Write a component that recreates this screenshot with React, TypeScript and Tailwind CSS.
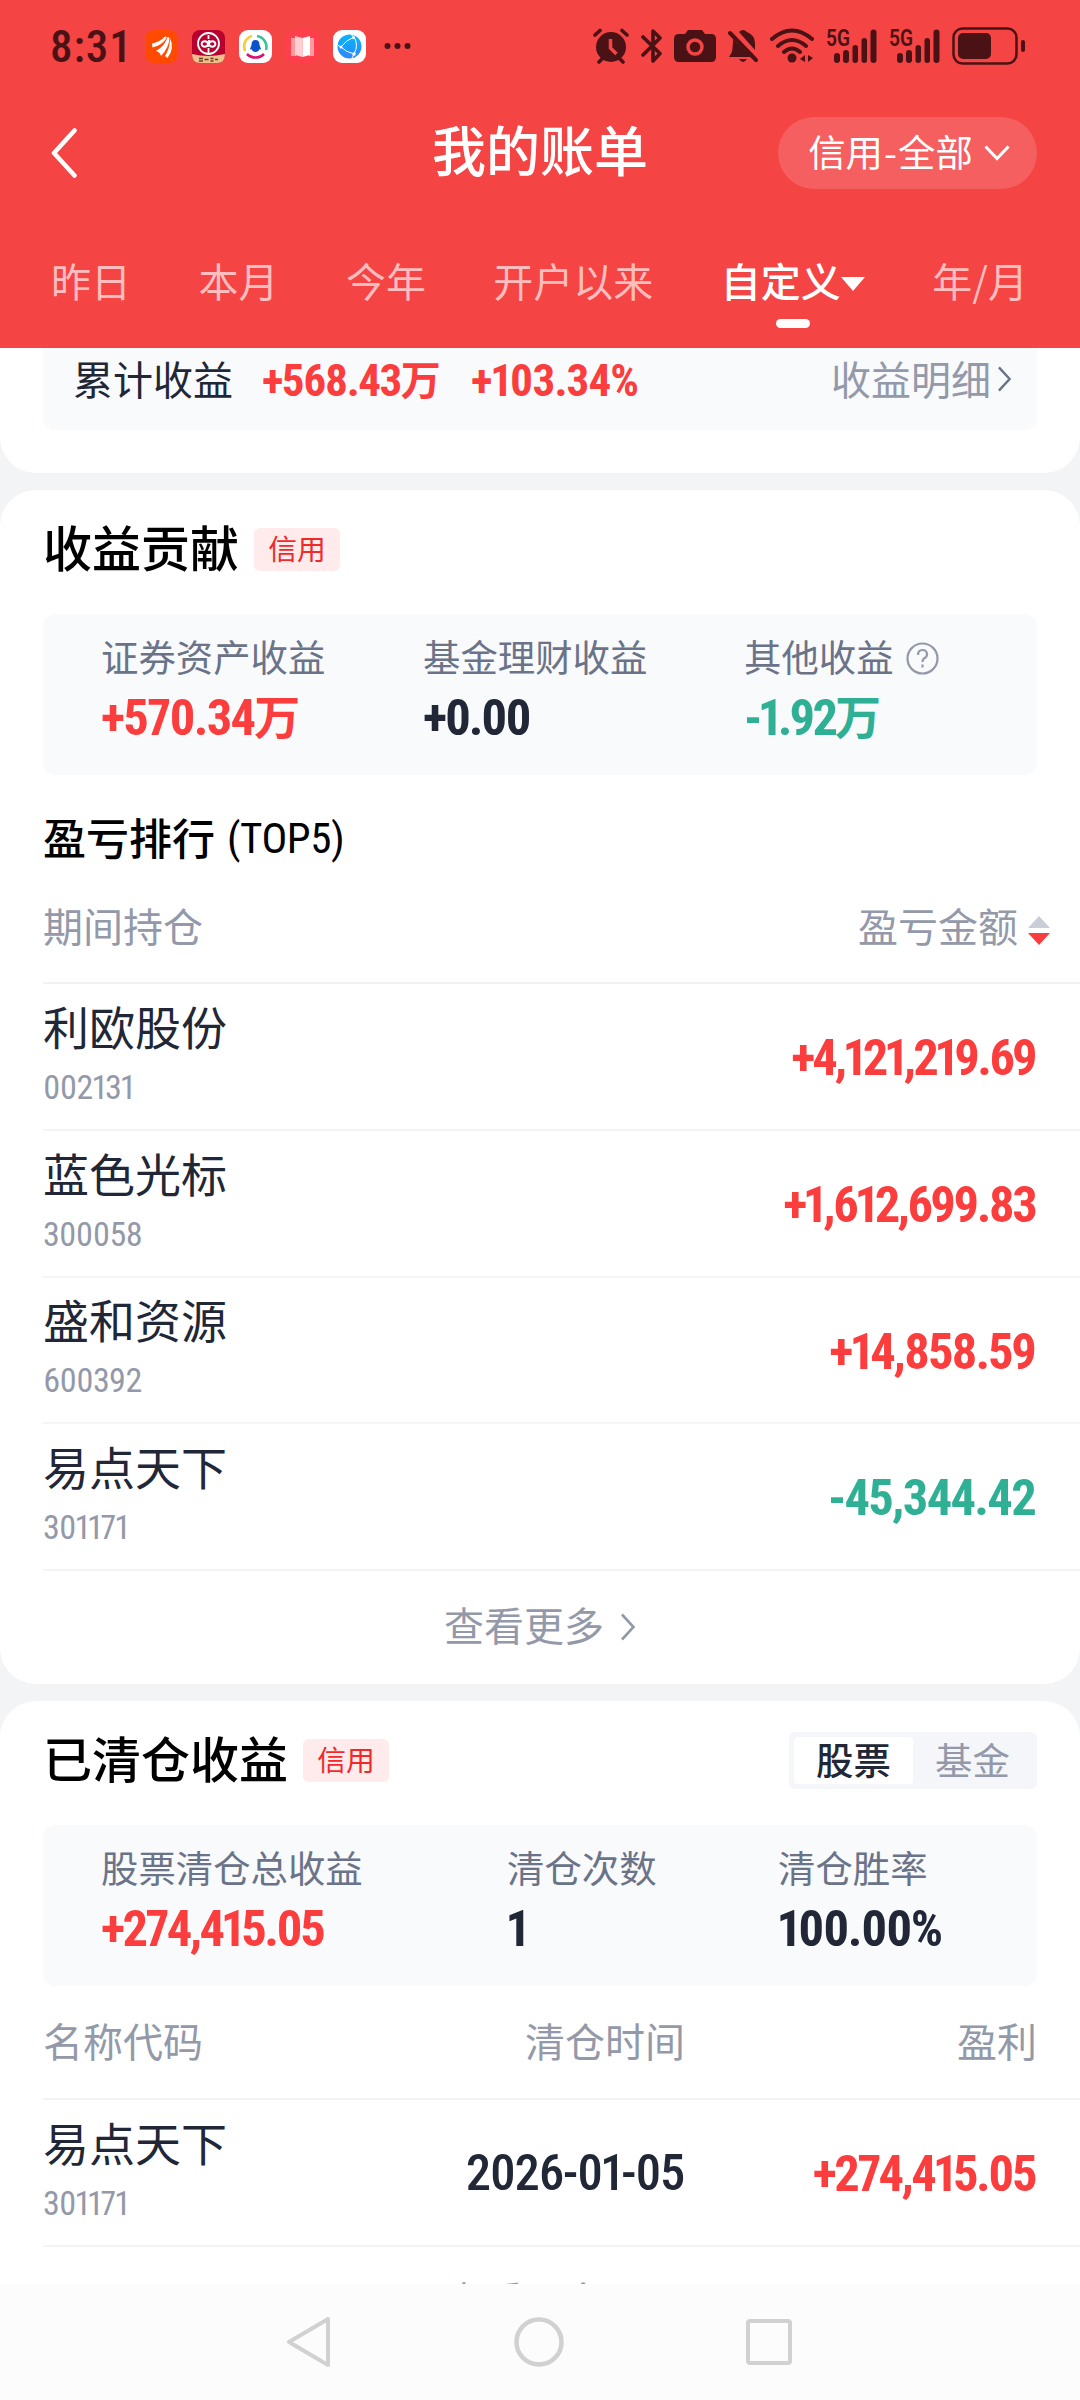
import React from "react";

const holdings = [
  { name: "利欧股份", code: "002131", amount: "+4,121,219.69", amountClass: "text-[#fb3d3d] tracking-[-0.06em]" },
  { name: "蓝色光标", code: "300058", amount: "+1,612,699.83", amountClass: "text-[#fb3d3d] tracking-[-0.056em]" },
  { name: "盛和资源", code: "600392", amount: "+14,858.59", amountClass: "text-[#fb3d3d] tracking-[-0.045em]" },
  { name: "易点天下", code: "301171", amount: "-45,344.42", amountClass: "text-[#2fb095] tracking-[-0.034em]" },
];

type NumProps = { text: string; className?: string };

// Condensed figures
const Num: React.FC<NumProps> = ({ text, className = "" }) => (
  <span
    className={`inline-block whitespace-nowrap proportional-nums font-stretch-[80%] font-[Roboto,'Noto_Sans_CJK_SC',sans-serif] ${className}`}
  >
    {text}
  </span>
);

const ChevronRight: React.FC<{ className?: string }> = ({ className }) => (
  <svg viewBox="0 0 16 28" className={className} fill="none" stroke="currentColor" strokeWidth="2.6">
    <path d="M2 1.5 L13.5 14 L2 26.5" />
  </svg>
);

const Tag: React.FC = () => (
  <span className="flex h-[43px] w-[86px] items-center justify-center rounded-md bg-[#ffebeb] pb-px text-[28.8px] text-[#f02a2a]">
    信用
  </span>
);

const Signal: React.FC = () => (
  <svg width="51" height="42" viewBox="0 -3 51 42" fill="currentColor">
    <text x="0" y="18" fontSize="24" fontWeight="600" fontFamily="Roboto" textLength="24" lengthAdjust="spacingAndGlyphs">
      5G
    </text>
    <rect x="8" y="25" width="6" height="10" rx="3" />
    <rect x="17" y="22" width="6" height="13" rx="3" />
    <rect x="26.500" y="17" width="5.500" height="18" rx="2.700" />
    <rect x="35.500" y="10" width="5.500" height="25" rx="2.700" />
    <rect x="44.500" y="1.500" width="6" height="33.500" rx="3" />
  </svg>
);

const StatusBar: React.FC = () => (
  <div className="flex h-[92px] items-center pl-[50px] pr-[55px] text-[#4a1214]">
    <span className="w-[95px] font-[Roboto,sans-serif] text-[45px] font-medium leading-none tracking-[0.02em] font-stretch-[85%]">8:31</span>
    <div className="flex items-center gap-[14px]">
      <svg width="33" height="33" viewBox="0 0 33 33">
        <rect width="33" height="33" rx="9" fill="#ff4a00" />
        <path d="M7 13.500Q15 12 20 6.500L22 7Q18 15 7.500 17.500ZM11 21Q20 16 22.500 7L24.500 7.500Q24 18 16 26Q15 22 11 21ZM20 26Q25 18 25 8.500Q30 18 22.500 28Z" fill="#fff" />
      </svg>
      <svg width="33" height="33" viewBox="0 0 33 33">
        <rect width="33" height="33" rx="8" fill="#b8002f" />
        <path d="M0 24 Q16 28 33 24 Q33 33 25 33 H8 Q0 33 0 24Z" fill="#eec08c" />
        <path d="M7 28.500h4M7 31h4M12.500 29.500h4M18.500 28.500h3M18.500 31h3M23 29.500h3" stroke="#6b3a22" strokeWidth="1.400" />
        <circle cx="16.500" cy="13.500" r="10.500" fill="none" stroke="#fff" strokeWidth="1.800" />
        <path d="M16.500 5v4M16.500 18v5M9.500 14a3.300 3.300 0 0 1 6.500 0v3M16 14a3.300 3.300 0 0 1-6.500 0M17 14a3.300 3.300 0 0 1 6.500 0a3.300 3.300 0 0 1-6.500 0v-4" fill="none" stroke="#fff" strokeWidth="1.800" />
      </svg>
      <svg width="33" height="33" viewBox="0 0 33 33">
        <rect width="33" height="33" rx="9" fill="#fff" />
        <path d="M6 21 A11 11 0 0 1 13 6" fill="none" stroke="#f3cf3d" strokeWidth="2.600" />
        <path d="M18 6 A11 11 0 0 1 27 20" fill="none" stroke="#36c39e" strokeWidth="2.600" />
        <path d="M8 24 A12 12 0 0 0 25 24" fill="none" stroke="#d9126c" strokeWidth="2.600" />
        <path d="M16.500 10q4 0 4 5l1.500 4q-1 1-1.500 0q-1 3-4 3t-4-3q-.5 1-1.500 0l1.500-4q0-5 4-5z" fill="#0b53c8" />
      </svg>
      <svg width="33" height="33" viewBox="0 0 33 33">
        <rect width="33" height="33" rx="9" fill="#ff3f4b" />
        <path d="M5 8h5v18H5zM23 8h5v18h-5z" fill="#ff9ba0" />
        <path d="M9 6l7.500 2v19L9 25z" fill="#ffd0d2" />
        <path d="M24 6l-7.500 2v19l7.500-2z" fill="#fff" />
      </svg>
      <svg width="33" height="33" viewBox="0 0 33 33">
        <defs>
          <linearGradient id="globe" x1="0" y1="0" x2="0" y2="1">
            <stop offset="0" stopColor="#07b6fb" />
            <stop offset="1" stopColor="#2f86fb" />
          </linearGradient>
        </defs>
        <rect width="33" height="33" rx="9" fill="#fff" />
        <circle cx="16.500" cy="16.500" r="12" fill="url(#globe)" />
        <path d="M21 7Q13 10 8 17Q13 22 21 24M21 7Q26 15 21 24M4.500 15l3.500 2M18 4.500l3 2.500M21 24l-2 4" fill="none" stroke="#fff" strokeWidth="1" />
        <g fill="#fff">
          <circle cx="20.500" cy="7.500" r="1.500" />
          <circle cx="8" cy="17" r="1.500" />
          <circle cx="21" cy="24" r="1.800" />
        </g>
      </svg>
    </div>
    <svg className="ml-[18px]" width="27" height="8" viewBox="0 0 27 8" fill="currentColor">
      <circle cx="3.500" cy="4" r="3" />
      <circle cx="13.500" cy="4" r="3" />
      <circle cx="23.500" cy="4" r="3" />
    </svg>

    <div className="ml-auto flex items-center gap-3">
      <svg width="36" height="36" viewBox="0 0 36 36" fill="currentColor">
        <circle cx="18" cy="19" r="15" />
        <path d="M2 7L7 2.500M34 7L29 2.500M6 34l4-4M30 34l-4-4" stroke="currentColor" strokeWidth="3.600" strokeLinecap="round" />
        <path d="M17.500 11v9l6 6" fill="none" stroke="#f44444" strokeWidth="3.500" />
      </svg>
      <svg width="21" height="36" viewBox="0 0 21 36" fill="none" stroke="currentColor" strokeWidth="3.600" strokeLinejoin="round" strokeLinecap="round">
        <path d="M2 9L19 25.500L12 33V3L19 10L2 27" />
      </svg>
      <svg width="42" height="34" viewBox="0 0 42 34">
        <path d="M5 5h6l3-4h14l3 4h6q5 0 5 5v18q0 5-5 5H5q-5 0-5-5V10q0-5 5-5z" fill="currentColor" />
        <circle cx="21" cy="18" r="7" fill="none" stroke="#f44444" strokeWidth="3.500" />
      </svg>
      <svg width="30" height="36" viewBox="0 0 30 36" fill="currentColor">
        <path d="M11 4q4-4 8 0q8 3 8 12v6zM5 11L23 29H1l3-5q1-6 1-13zM11 31h8q-4 6-8 0z" />
        <path d="M2 5L28 32" stroke="currentColor" strokeWidth="4" strokeLinecap="round" />
      </svg>
      <svg width="44" height="36" viewBox="0 0 44 36" fill="none" stroke="currentColor" strokeWidth="4" strokeLinecap="round">
        <path d="M2 11Q22-6 42 11M8 18Q22 6 36 18M14 24Q22 17 30 24" />
        <circle cx="22" cy="30" r="4.500" fill="currentColor" stroke="none" />
        <path d="M30 31l5-4v7zM38 34v-7l5 3z" fill="currentColor" stroke="none" />
      </svg>
      <Signal />
      <Signal />
      <svg width="73" height="38" viewBox="0 0 73 38">
        <rect x="1.500" y="1.500" width="63" height="35" rx="9" fill="none" stroke="currentColor" strokeWidth="2.500" />
        <rect x="6" y="6" width="33" height="26" rx="5" fill="currentColor" />
        <rect x="69" y="13" width="4" height="12" rx="2" fill="currentColor" />
      </svg>
    </div>
  </div>
);

const Header: React.FC = () => (
  <header className="h-[348px] bg-[#f44444] text-white">
    <StatusBar />
    <div className="grid h-[122px] grid-cols-3 items-center px-[43px]">
      <svg className="ml-2" width="27" height="50" viewBox="0 0 27 50" fill="none" stroke="currentColor" strokeWidth="4.500" strokeLinecap="round" strokeLinejoin="round">
        <path d="M23.500 2.500L3 25L23.500 47.500" />
      </svg>
      <h1 className="pb-[9px] text-center text-[54px] font-medium">我的账单</h1>
      <button className="flex h-[72px] w-[259px] items-center justify-center gap-[11px] justify-self-end rounded-full bg-white/15 pl-[3px] text-[37.4px]">
        <span className="pb-[3px]">
          信用<span className="px-px">-</span>全部
        </span>
        <svg width="26" height="16" viewBox="0 0 26 16" fill="none" stroke="currentColor" strokeWidth="3">
          <path d="M1.500 1.500L13 13.500L24.500 1.500" />
        </svg>
      </button>
    </div>
    <nav className="flex h-[134px] items-start justify-between pl-[51px] pr-[52px] pt-[46px] text-[40px] text-[#ffbdbd]">
      <span>昨日</span>
      <span>本月</span>
      <span>今年</span>
      <span>开户以来</span>
      <span className="relative flex items-center font-medium text-white">
        自定义
        <svg width="24" height="14" viewBox="0 0 24 14" fill="currentColor" className="mt-2">
          <path d="M0 0H24L12 14z" />
        </svg>
        <i className="absolute left-[55px] top-[59px] h-[9px] w-[34px] rounded-full bg-white" />
      </span>
      <span>年/月</span>
    </nav>
  </header>
);

const App: React.FC = () => {
  return (
    <div className="flex h-[2400px] w-[1080px] flex-col overflow-hidden bg-[#f3f4f6] font-['Noto_Sans_CJK_SC',sans-serif] leading-none text-[#212736]">
      <Header />

      <main className="flex h-[1936px] flex-col gap-[17px] overflow-hidden">
        {/* Total profit */}
        <section className="h-[125px] shrink-0 rounded-b-[36px] bg-white px-[43px]">
          <div className="flex h-[82px] items-center rounded-b-xl bg-[#f9fafc] pb-[23px] pl-[30px] pr-[25px] text-[40px]">
            <span className="w-[189px]">累计收益</span>
            <span className="flex w-[209px] items-center font-bold text-[#fb3d3d]">
              <Num text="+568.43" className="mt-[5px] text-[45px] tracking-[-0.034em]" />
              万
            </span>
            <Num text="+103.34%" className="mt-[5px] text-[45px] font-bold tracking-[-0.02em] text-[#fb3d3d]" />
            <span className="ml-auto flex items-center gap-[6px] text-[#9399a9]">
              收益明细
              <ChevronRight className="mt-[3px] h-[26px] w-[15px] text-[#6a7388]" />
            </span>
          </div>
        </section>

        {/* Profit contribution */}
        <section className="h-[1194px] shrink-0 rounded-[36px] bg-white pl-[43px]">
          <div className="flex h-[124px] items-center gap-[15px] pb-[6px] text-black">
            <h2 className="pb-[7px] text-[49px] font-medium">收益贡献</h2>
            <Tag />
          </div>
          <div className="mr-[43px] grid h-[161px] grid-cols-[322px_321px_1fr] rounded-xl bg-[#f9fafc] pl-[58px] pt-6">
            <div>
              <p className="text-[37.4px] text-[#6a7388]">证券资产收益</p>
              <p className="mt-[17px] flex items-start text-[46px] font-bold text-[#fb3d3d]">
                <Num text="+570.34" className="pt-px text-[50.600px] tracking-[-0.036em]" />
                <span className="-mt-px">万</span>
              </p>
            </div>
            <div>
              <p className="text-[37.4px] text-[#6a7388]">基金理财收益</p>
              <Num text="+0.00" className="mt-[18px] text-[50.600px] font-bold tracking-[-0.048em]" />
            </div>
            <div>
              <p className="flex items-center gap-3 text-[37.4px] text-[#6a7388]">
                其他收益
                <svg width="33" height="33" viewBox="0 0 33 33" fill="none" stroke="#9399a9" strokeWidth="2.200" className="mt-1">
                  <circle cx="16.500" cy="16.500" r="15" />
                  <path d="M12 13q0-5 4.500-5t4.500 4.500q0 2.500-3 4q-1.500 1-1.500 3.500M16.500 22.500v3" />
                </svg>
              </p>
              <p className="mt-[17px] flex items-start text-[46px] font-bold text-[#2fb095]">
                <Num text="-1.92" className="pt-px text-[50.600px] tracking-[-0.06em]" />
                <span className="-mt-px">万</span>
              </p>
            </div>
          </div>

          <h3 className="flex h-[125px] items-center gap-3 text-[43px] font-medium text-black">
            <span className="pb-[3px]">盈亏排行</span>
            <Num text="(TOP5)" className="pt-px text-[43px] font-normal tracking-[-0.01em]" />
          </h3>
          <div className="flex h-[84px] items-center justify-between border-b-2 border-[#f2f2f4] pb-[33px] pr-[30px] text-[40px] text-[#9399a9]">
            <span>期间持仓</span>
            <span className="flex items-center gap-[10px]">
              盈亏金额
              <svg width="22" height="29" viewBox="0 0 22 29" className="mt-[12px]">
                <path d="M0 12L11 0L22 12z" fill="#c9cdd8" />
                <path d="M0 17H22L11 29z" fill="#fb3d3d" />
              </svg>
            </span>
          </div>
          {holdings.map((item) => (
            <div key={item.code} className="flex h-[146.800px] items-center justify-between border-b-2 border-[#f5f5f7] pr-[45px]">
              <div className="-mt-[7px]">
                <p className="text-[46px]">{item.name}</p>
                <Num text={item.code} className="mt-[22px] text-[34px] tracking-[-0.02em] text-[#9399a9]" />
              </div>
              <Num text={item.amount} className={`pt-1 text-[50.600px] font-bold ${item.amountClass}`} />
            </div>
          ))}
          <div className="mr-[43px] flex h-[112px] items-center justify-center gap-4 pb-[6px] text-[40px] text-[#9399a9]">
            查看更多
            <ChevronRight className="mt-[6px] h-7 w-4" />
          </div>
        </section>

        {/* Closed positions */}
        <section className="h-[640px] shrink-0 rounded-t-[36px] bg-white pl-[43px]">
          <div className="flex h-[124px] items-center gap-[15px] pb-[6px] pr-[43px] text-black">
            <h2 className="pb-[7px] text-[49px] font-medium">已清仓收益</h2>
            <Tag />
            <div className="ml-auto flex h-[57px] w-[248px] items-center rounded-md bg-[#f4f6fa] p-[5px] text-[37.4px]">
              <span className="flex h-full w-[119px] items-center justify-center rounded bg-white font-medium text-[#212736]">
                股票
              </span>
              <span className="flex-1 text-center text-[#9399a9]">基金</span>
            </div>
          </div>
          <div className="mr-[43px] grid h-[161px] grid-cols-[406px_271px_1fr] rounded-xl bg-[#f9fafc] pl-[58px] pt-6">
            <div>
              <p className="text-[37.4px] text-[#6a7388]">股票清仓总收益</p>
              <Num text="+274,415.05" className="mt-[18px] text-[50.600px] font-bold tracking-[-0.052em] text-[#fb3d3d]" />
            </div>
            <div>
              <p className="text-[37.4px] text-[#6a7388]">清仓次数</p>
              <Num text="1" className="mt-[18px] text-[50.600px] font-bold" />
            </div>
            <div>
              <p className="text-[37.4px] text-[#6a7388]">清仓胜率</p>
              <Num text="100.00%" className="mt-[18px] text-[50.600px] font-bold tracking-[-0.032em]" />
            </div>
          </div>
          <div className="grid h-[114px] grid-cols-[320px_322px_1fr] items-center border-b-2 border-[#f2f2f4] pb-1 pr-[43px] text-[40px] text-[#9399a9]">
            <span>名称代码</span>
            <span className="text-right">清仓时间</span>
            <span className="text-right">盈利</span>
          </div>
          <div className="grid h-[147px] grid-cols-[320px_321px_1fr] items-center border-b-2 border-[#f5f5f7] pr-[45px]">
            <div className="-mt-[7px]">
              <p className="text-[46px]">易点天下</p>
              <Num text="301171" className="mt-[22px] text-[34px] tracking-[-0.02em] text-[#9399a9]" />
            </div>
            <Num text="2026-01-05" className="pt-[2px] text-right text-[50.600px] font-medium tracking-[-0.028em]" />
            <Num text="+274,415.05" className="pt-[3px] text-right text-[50.600px] font-bold tracking-[-0.052em] text-[#fb3d3d]" />
          </div>
          <div className="mr-[43px] flex h-[112px] items-center justify-center gap-4 pb-2 text-[40px] text-[#9399a9]">
            查看更多
            <ChevronRight className="mt-[6px] h-7 w-4" />
          </div>
        </section>
      </main>

      {/* System navigation */}
      <footer className="flex h-[116px] items-center justify-between bg-[#fcfcfc] pl-[286px] pr-[288px]">
        <svg width="46" height="52" viewBox="0 0 46 52" fill="none" stroke="#d1d1d1" strokeWidth="4" strokeLinejoin="round">
          <path d="M42 3V49L3 26z" />
        </svg>
        <svg width="50" height="50" viewBox="0 0 50 50" fill="none" stroke="#d1d1d1" strokeWidth="4.500">
          <circle cx="25" cy="25" r="22.500" />
        </svg>
        <svg width="46" height="46" viewBox="0 0 46 46" fill="none" stroke="#d1d1d1" strokeWidth="4">
          <rect x="2" y="2" width="42" height="42" rx="2" />
        </svg>
      </footer>
    </div>
  );
};

export default App;
